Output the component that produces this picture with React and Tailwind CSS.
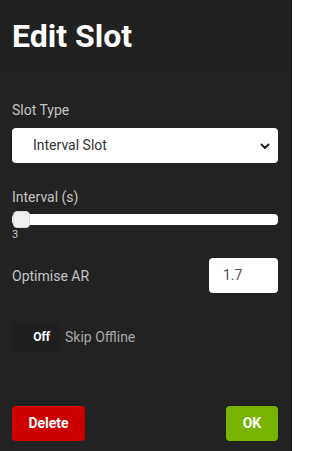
export default function App() {
  return (
    <div className="w-[292px] h-[451px] bg-[#222222] flex flex-col overflow-hidden" style={{ fontFamily: "Roboto, 'Liberation Sans', sans-serif" }}>
      <div className="h-[76px] pl-3 pr-[14px] pt-[17px] border-b border-[#242424] bg-[#212121] shrink-0">
        <h1 className="text-[32px] leading-[38px] font-bold text-white">Edit Slot</h1>
      </div>
      <div className="flex-1 pl-3 pr-[14px] pt-6 flex flex-col">
        <div className="text-[14px] leading-5 text-[#c4c4c4]">Slot Type</div>
        <div className="mt-2 h-[35px] bg-white rounded-[4px] flex items-center justify-between pl-[21px] pr-[7px]">
          <span className="text-[14px] text-[#333333]">Interval Slot</span>
          <svg width="12" height="12" viewBox="0 0 12 12" fill="none">
            <path d="M2.5 4.5 L6 8 L9.5 4.5" stroke="#222" strokeWidth="2" strokeLinecap="round" strokeLinejoin="round" />
          </svg>
        </div>
        <div className="mt-6 text-[14px] leading-5 text-[#c4c4c4]">Interval (s)</div>
        <div className="relative mt-[7px] h-[11px] bg-white rounded-[4px]">
          <div className="absolute left-[1px] top-[-3px] w-[17px] h-[17px] bg-[#efefef] rounded-[4px] border border-[#d8d8d8]" />
        </div>
        <div className="mt-[4px] text-[11px] leading-[12px] text-[#c4c4c4]">3</div>
        <div className="mt-[17px] flex items-center justify-between">
          <span className="text-[14px] leading-5 text-[#c4c4c4]">Optimise AR</span>
          <div className="w-[69px] h-[35px] bg-white rounded-[4px] flex items-center pl-[14px]">
            <span className="text-[14px] text-[#555555]">1.7</span>
          </div>
        </div>
        <div className="mt-[29px] flex items-center gap-[6px]">
          <div className="w-[47px] h-[30px] bg-[#1f1f1f] rounded-[2px] flex items-center justify-end pr-[9px]">
            <span className="text-[12px] font-bold text-white">Off</span>
          </div>
          <span className="text-[14px] text-[#a8a8a8]">Skip Offline</span>
        </div>
      </div>
      <div className="h-[63px] shrink-0 border-t border-[#242424] pl-3 pr-[14px] pt-[17px] flex justify-between items-start">
        <button className="w-[73px] h-[35px] bg-[#cc0000] rounded-[4px] text-white font-bold text-[14px]">Delete</button>
        <button className="w-[52px] h-[35px] bg-[#77b300] rounded-[4px] text-white font-bold text-[14px]">OK</button>
      </div>
    </div>
  );
}
